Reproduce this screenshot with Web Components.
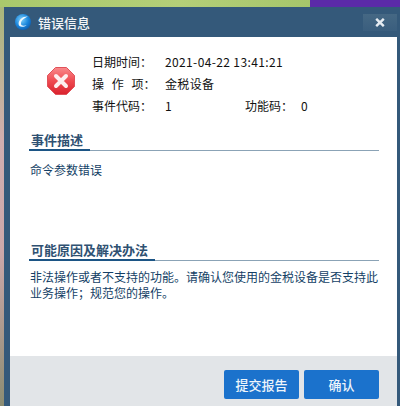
<!DOCTYPE html>
<html lang="zh">
<head>
<meta charset="utf-8">
<style>
  html, body { margin: 0; height: 406px; overflow: hidden; }
  body {
    font: 12px "Noto Sans CJK SC", "Liberation Sans", sans-serif;
    background:
      linear-gradient(90deg, #a9c96c 0, #b4cf78 45%, #a5c66b 77.5%, #5b2aa8 77.5%, #5b2aa8 100%) top / 100% 7px no-repeat,
      linear-gradient(180deg, #a8b878 0, #d0aeb0 35%, #cca8aa 62%, #8b8c72 100%);
  }
</style>
</head>
<body>
<error-dialog>
  <title-bar slot="title">错误信息</title-bar>
  <div slot="info">
    <info-grid>
      <info-row label="日期时间：">2021-04-22 13:41:21</info-row>
      <info-row label="操 作 项：" spaced>金税设备</info-row>
      <info-row label="事件代码：" extra-label="功能码：" extra-value="0">1</info-row>
    </info-grid>
  </div>
  <dialog-section slot="body" heading="事件描述" gap="101" text-gap="11">命令参数错误</dialog-section>
  <dialog-section slot="body" heading="可能原因及解决办法" text-gap="8">非法操作或者不支持的功能。请确认您使用的金税设备是否支持此业务操作；规范您的操作。</dialog-section>
  <dialog-button slot="actions">提交报告</dialog-button>
  <dialog-button slot="actions">确认</dialog-button>
</error-dialog>

<script>
class ErrorDialog extends HTMLElement {
  connectedCallback() {
    this.attachShadow({ mode: "open" }).innerHTML = `
      <style>
        :host {
          display: flex;
          flex-direction: column;
          box-sizing: border-box;
          width: 396px;
          height: 399px;
          margin: 7px 0 0 4px;
          background: #34597a;
          padding-right: 3px;
        }
        .panel {
          flex: 1;
          display: flex;
          flex-direction: column;
          margin-left: 6px;
          background: #fff;
        }
        .info {
          display: flex;
          align-items: center;
          height: 84px;
          padding-top: 4px;
          box-sizing: border-box;
        }
        .info svg { margin-left: 37px; margin-right: 17px; flex: none; }
        .info slot { display: block; margin-top: 4px; }
        .body {
          flex: 1;
          display: flex;
          flex-direction: column;
          padding: 10px 18px 0 19px;
        }
        .actions {
          display: flex;
          justify-content: flex-end;
          gap: 5px;
          height: 50px;
          box-sizing: border-box;
          padding: 14px 18px 0 0;
          background: #e2e5e8;
        }
      </style>
      <slot name="title"></slot>
      <div class="panel">
        <div class="info">
          <svg width="28" height="28" viewBox="0 0 28 28">
            <defs>
              <linearGradient id="red" x1="0" y1="0" x2="0" y2="1">
                <stop offset="0" stop-color="#f98a8c"/>
                <stop offset=".5" stop-color="#ef4a50"/>
                <stop offset="1" stop-color="#d9222e"/>
              </linearGradient>
            </defs>
            <path d="M8.5 0.5H19.5L27.5 8.5V19.5L19.5 27.5H8.5L0.5 19.5V8.5Z" fill="url(#red)" stroke="#e0525a"/>
            <path d="M9 9L19 19M19 9L9 19" stroke="#fdeeee" stroke-width="4" stroke-linecap="round"/>
          </svg>
          <slot name="info"></slot>
        </div>
        <div class="body"><slot name="body"></slot></div>
        <div class="actions"><slot name="actions"></slot></div>
      </div>`;
  }
}

class TitleBar extends HTMLElement {
  connectedCallback() {
    this.attachShadow({ mode: "open" }).innerHTML = `
      <style>
        :host {
          display: flex;
          align-items: center;
          height: 30px;
          flex: none;
          color: #f2f5f8;
          font-size: 13px;
          font-weight: 500;
        }
        svg { margin: 0 6px 0 10px; flex: none; }
        .text { flex: 1; }
        .close {
          align-self: flex-start;
          width: 34px;
          height: 17px;
          margin-top: 7px;
          display: flex;
          align-items: center;
          justify-content: center;
          background: linear-gradient(180deg, #456884, #3a5e7e);
        }
        .close svg { margin: 0; }
      </style>
      <svg width="18" height="18" viewBox="0 0 18 18">
        <defs>
          <radialGradient id="ball" cx=".4" cy=".35" r=".7">
            <stop offset="0" stop-color="#7fd0fa"/>
            <stop offset=".6" stop-color="#1a86dc"/>
            <stop offset="1" stop-color="#0b5cb0"/>
          </radialGradient>
        </defs>
        <circle cx="9" cy="9" r="8" fill="url(#ball)"/>
        <path d="M14 3.6C9 3 4.8 6.6 4.6 10.6C4.4 14.4 9.2 14.8 12.6 12.2C9.6 13.2 6.8 12.8 7 10.2C7.2 7.4 10.6 4.8 14 3.6Z" fill="#eef8ff"/>
      </svg>
      <span class="text"><slot></slot></span>
      <span class="close">
        <svg width="10" height="9" viewBox="0 0 10 9">
          <path d="M1.2 0.8L8.8 8.2M8.8 0.8L1.2 8.2" stroke="#e6ecf2" stroke-width="2.4"/>
        </svg>
      </span>`;
  }
}

class InfoGrid extends HTMLElement {
  connectedCallback() {
    this.attachShadow({ mode: "open" }).innerHTML = `
      <style>
        :host { display: grid; row-gap: 5px; color: #111; }
      </style>
      <slot></slot>`;
  }
}

class InfoRow extends HTMLElement {
  connectedCallback() {
    const extra = this.getAttribute("extra-label");
    const shadow = this.attachShadow({ mode: "open" });
    shadow.innerHTML = `
      <style>
        :host {
          display: grid;
          grid-template-columns: 73px 80px 57px auto;
          align-items: center;
          height: 17px;
          line-height: 17px;
          white-space: pre;
        }
        .spaced { word-spacing: 5px; }
        .value { letter-spacing: .37px; }
        .extra-value { letter-spacing: .37px; margin-left: -1px; }
      </style>
      <span class="label"></span>
      <span class="value"><slot></slot></span>
      <span class="extra-label"></span>
      <span class="extra-value"></span>`;
    const label = shadow.querySelector(".label");
    label.textContent = this.getAttribute("label");
    if (this.hasAttribute("spaced")) label.classList.add("spaced");
    if (extra) {
      shadow.querySelector(".extra-label").textContent = extra;
      shadow.querySelector(".extra-value").textContent = this.getAttribute("extra-value");
    }
  }
}

class DialogSection extends HTMLElement {
  connectedCallback() {
    const shadow = this.attachShadow({ mode: "open" });
    shadow.innerHTML = `
      <style>
        :host { display: block; color: #143f66; }
        .head { border-bottom: 1px solid #8ba3b6; height: 19px; }
        h2 {
          display: inline-block;
          box-sizing: border-box;
          height: 20px;
          margin: 0;
          padding: 0 7px 0 2px;
          border-bottom: 2px solid #1c5585;
          color: #2f5172;
          font-size: 13px;
          font-weight: 700;
          line-height: 17px;
        }
        p { margin: 0; padding: 8px 0 0 1px; line-height: 16px; }
      </style>
      <div class="head"><h2></h2></div>
      <p><slot></slot></p>`;
    shadow.querySelector("h2").textContent = this.getAttribute("heading");
    shadow.querySelector("p").style.paddingTop = this.getAttribute("text-gap") + "px";
    if (this.hasAttribute("gap")) {
      this.style.height = this.getAttribute("gap") + "px";
      this.style.flex = "none";
      this.style.marginBottom = "9px";
    }
  }
}

class DialogButton extends HTMLElement {
  connectedCallback() {
    this.attachShadow({ mode: "open" }).innerHTML = `
      <style>
        :host {
          display: flex;
          align-items: center;
          justify-content: center;
          width: 75px;
          height: 29px;
          border-radius: 2px;
          background: #1b72cc;
          color: #eef5fb;
          font-size: 13px;
          font-weight: 500;
        }
      </style>
      <slot></slot>`;
  }
}

customElements.define("error-dialog", ErrorDialog);
customElements.define("title-bar", TitleBar);
customElements.define("info-grid", InfoGrid);
customElements.define("info-row", InfoRow);
customElements.define("dialog-section", DialogSection);
customElements.define("dialog-button", DialogButton);
</script>
</body>
</html>
